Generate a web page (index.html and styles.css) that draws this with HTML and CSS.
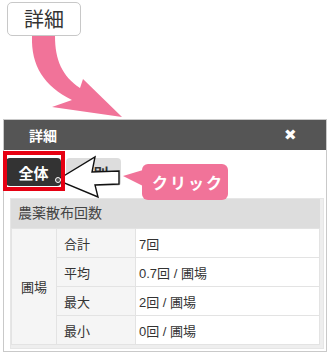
FILE: index.html
```html
<!DOCTYPE html>
<html lang="ja">
<head>
    <meta charset="UTF-8">
    <meta name="viewport" content="width=device-width, initial-scale=1.0">
    <title>詳細</title>
    <link rel="stylesheet" href="styles.css">
</head>
<body>
    <div id="page">
        <button class="detail-btn">詳細</button>

        <div class="dialog">
            <div class="dialog-head">
                <span class="dialog-title">詳細</span>
                <span class="dialog-close">&#x2716;</span>
            </div>
            <div class="tabs">
                <button class="tab active">全体</button>
                <button class="tab">月別</button>
            </div>
            <div class="section">
                <div class="section-head">農薬散布回数</div>
                <table class="stats">
                    <tr>
                        <td class="group" rowspan="4">圃場</td>
                        <td class="label">合計</td>
                        <td class="value">7回</td>
                    </tr>
                    <tr>
                        <td class="label">平均</td>
                        <td class="value">0.7回 / 圃場</td>
                    </tr>
                    <tr>
                        <td class="label">最大</td>
                        <td class="value">2回 / 圃場</td>
                    </tr>
                    <tr>
                        <td class="label">最小</td>
                        <td class="value">0回 / 圃場</td>
                    </tr>
                </table>
            </div>
        </div>

        <!-- annotations drawn over the screenshot -->
        <svg class="marks" width="330" height="353" viewBox="0 0 330 353">
            <path class="pink-arrow" d="M32,36 C31,66 44,86 72,100 L52,107 L122,117 L83,79 L80,88 C62,76 55,60 55,36 Z"/>
            <polygon class="pointer" points="57,180 95,157 92,172 119,171 119,184 95,185 98,197"/>
            <circle class="pointer-dot" cx="58" cy="180" r="2.5"/>
        </svg>
        <div class="red-box"></div>
        <div class="callout">クリック</div>
    </div>
</body>
</html>
```

FILE: styles.css
```css
* {
    box-sizing: border-box;
}

body {
    margin: 0;
    font-family: "Liberation Sans", "Noto Sans CJK JP", sans-serif;
    color: #333;
    background: #fff;
}

#page {
    position: relative;
    width: 330px;
    height: 353px;
    overflow: hidden;
    padding-top: 2px;
}

.detail-btn {
    display: block;
    margin-left: 7px;
    width: 74px;
    height: 34px;
    padding: 0;
    background: #fff;
    border: 1px solid #c8c8c8;
    border-radius: 5px;
    font-family: "Noto Sans CJK JP", sans-serif;
    font-size: 20px;
    line-height: 30px;
    color: #333;
}

.dialog {
    margin: 83px 3px 0;
    border: 1px solid #c9c9c9;
    padding-bottom: 2px;
}

.dialog-head {
    height: 30px;
    background: #555;
    color: #fff;
    display: flex;
    align-items: center;
    justify-content: space-between;
    padding: 0 29px 0 25px;
}

.dialog-title {
    font-size: 14px;
    font-weight: bold;
}

.dialog-close {
    font-size: 15px;
}

.tabs {
    height: 48px;
    display: flex;
    gap: 5px;
    padding: 8px 0 0 2px;
}

.tab {
    width: 55px;
    height: 28px;
    padding: 0;
    border: none;
    border-radius: 4px;
    background: #ddd;
    color: #333;
    font-family: "Noto Sans CJK JP", sans-serif;
    font-size: 15px;
    font-weight: bold;
}

.tab.active {
    background: #333;
    color: #fff;
}

.section {
    margin: 0 2px 0 6px;
    border: 1px solid #e6e6e6;
    background: #eee;
    padding: 0 3px 3px 0;
}

.section-head {
    height: 29px;
    line-height: 29px;
    background: #ddd;
    padding-left: 7px;
    font-size: 14px;
    color: #444;
}

.stats {
    width: 100%;
    border-collapse: collapse;
    font-size: 13px;
}

.stats td {
    height: 29px;
    border: 1px solid #e3e3e3;
    padding: 0;
}

.stats .group {
    width: 45px;
    text-align: center;
    background: #f5f5f5;
}

.stats .label {
    width: 79px;
    padding-left: 7px;
    background: #f5f5f5;
}

.stats .value {
    padding-left: 3px;
    background: #fff;
}

.marks {
    position: absolute;
    left: 0;
    top: 0;
}

.pink-arrow {
    fill: #f17399;
}

.pointer {
    fill: #fff;
    stroke: #111;
    stroke-width: 1.4;
    stroke-linejoin: miter;
}

.pointer-dot {
    fill: #555;
    stroke: #fff;
    stroke-width: 1;
}

.red-box {
    position: absolute;
    left: 3px;
    top: 151px;
    width: 62px;
    height: 40px;
    border: 4px solid #e60012;
}

.callout {
    position: absolute;
    left: 142px;
    top: 164px;
    width: 86px;
    height: 36px;
    border-radius: 6px;
    background: #f17399;
    color: #fff;
    font-family: "Noto Sans CJK JP", sans-serif;
    font-size: 16px;
    font-weight: bold;
    letter-spacing: 2px;
    line-height: 36px;
    padding-left: 10px;
}

.callout::before {
    content: "";
    position: absolute;
    left: -19px;
    top: 6px;
    border-style: solid;
    border-width: 6px 20px 10px 0;
    border-color: transparent #f17399 transparent transparent;
}
```
